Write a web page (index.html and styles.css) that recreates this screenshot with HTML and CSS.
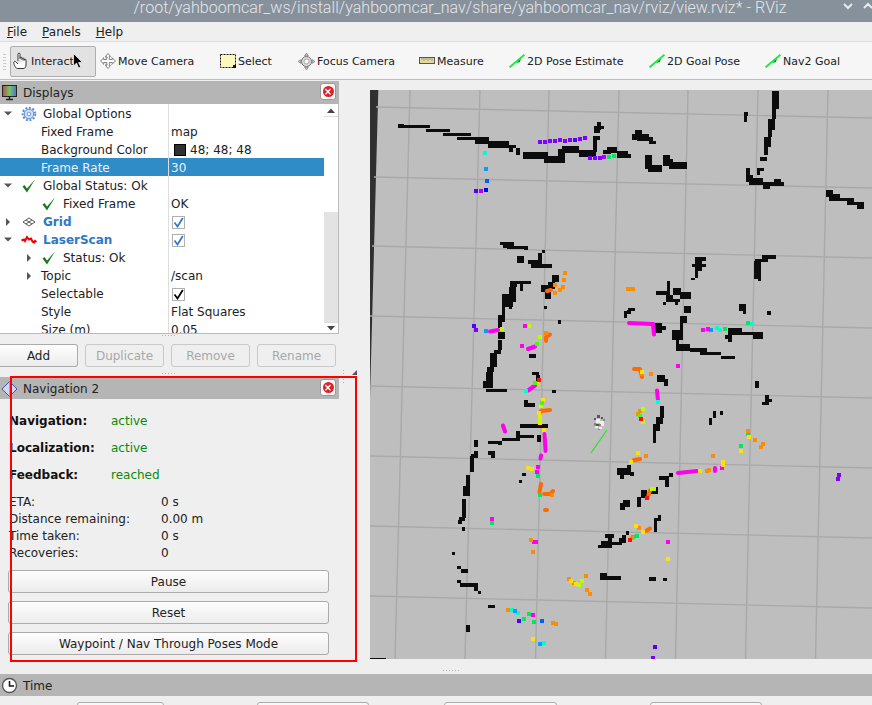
FILE: index.html
```html
<!DOCTYPE html>
<html lang="en">
<head>
<meta charset="utf-8">
<title>RViz</title>
<link rel="stylesheet" href="styles.css">
</head>
<body>
<div class="app">
  <header class="titlebar">
    <span class="title">/root/yahboomcar_ws/install/yahboomcar_nav/share/yahboomcar_nav/rviz/view.rviz* - RViz</span>
    <svg class="winbtns" width="40" height="14" viewBox="0 0 40 14"><path d="M2 4l4 4 4-4M22 8l4-4 4 4" fill="none" stroke="#e6eaee" stroke-width="2"/></svg>
  </header>
  <nav class="menubar">
    <span class="menu"><u>F</u>ile</span><span class="menu"><u>P</u>anels</span><span class="menu"><u>H</u>elp</span>
  </nav>
  <div class="toolbar">
    <div class="grip"></div>
    <div class="tool active">
      <svg width="16" height="18" viewBox="0 0 16 18"><path d="M5 9V2.200c0-1.400 2-1.400 2 0V7m0-1c0-1.200 2-1.200 2 0v2m0-1c0-1.200 2-1.200 2 0v2m0-1c0-1.200 2-1.200 2 0v5c0 2-1 3-2 3.500H4.500C3 17 1 13 .8 10.500c0-1.300 1.500-1.500 2.200-.5L5 12" fill="#fff" stroke="#222" stroke-width=".9"/></svg>
      <span>Interact</span>
    </div>
    <div class="tool">
      <svg width="16" height="16" viewBox="0 0 16 16"><path d="M8 .5l2.500 3H9.300V6.500h3V5l3.200 3-3.200 3V9.500h-3v3h1.200L8 15.500l-2.500-3h1.200v-3h-3V11L.5 8l3.200-3v1.500h3v-3H5.500z" fill="#fff" stroke="#666" stroke-width=".8"/><path d="M3 4.500h10M3 11.500h10" stroke="#999" stroke-width=".7" stroke-dasharray="1 1"/></svg>
      <span>Move Camera</span>
    </div>
    <div class="tool">
      <svg width="16" height="14" viewBox="0 0 16 14"><rect x=".5" y=".5" width="15" height="13" fill="#fcf8bc" stroke="#111" stroke-dasharray="2 1"/><rect x="13" y="11" width="3" height="3" fill="#111"/></svg>
      <span>Select</span>
    </div>
    <div class="tool">
      <svg width="17" height="17" viewBox="0 0 17 17"><circle cx="8.500" cy="8.500" r="5" fill="#ddd" stroke="#777"/><circle cx="8.500" cy="8.500" r="2.500" fill="#fff" stroke="#888" stroke-width=".7"/><path d="M8.500 0l2 3h-4zM8.500 17l2-3h-4zM0 8.500l3-2v4zM17 8.500l-3-2v4z" fill="#bbb" stroke="#777" stroke-width=".6"/></svg>
      <span>Focus Camera</span>
    </div>
    <div class="tool">
      <svg width="16" height="8" viewBox="0 0 16 8"><rect x=".5" y=".5" width="15" height="6" fill="#e6d9a0" stroke="#555"/><path d="M3 1v2M5 1v3M7 1v2M9 1v3M11 1v2M13 1v3" stroke="#777" stroke-width=".6"/></svg>
      <span>Measure</span>
    </div>
    <div class="tool">
      <svg class="arrow-ico" width="16" height="14" viewBox="0 0 16 14"><path d="M.5 13.300L15.500.7" stroke="#14f03c" stroke-width="2"/><path d="M7.500 8.800l4.500-4.300-1.200 3.800z" fill="#0a8a26"/></svg>
      <span>2D Pose Estimate</span>
    </div>
    <div class="tool">
      <svg class="arrow-ico" width="16" height="14" viewBox="0 0 16 14"><path d="M.5 13.300L15.500.7" stroke="#14f03c" stroke-width="2"/><path d="M7.500 8.800l4.500-4.300-1.200 3.800z" fill="#0a8a26"/></svg>
      <span>2D Goal Pose</span>
    </div>
    <div class="tool">
      <svg class="arrow-ico" width="16" height="14" viewBox="0 0 16 14"><path d="M.5 13.300L15.500.7" stroke="#14f03c" stroke-width="2"/><path d="M7.500 8.800l4.500-4.300-1.200 3.800z" fill="#0a8a26"/></svg>
      <span>Nav2 Goal</span>
    </div>
  </div>
  <svg class="pointer" width="10" height="16" viewBox="0 0 10 16"><path d="M.5.500v12.500l3-3 2.200 5 2-1-2.200-4.500H9.500z" fill="#000" stroke="#fff" stroke-width=".7"/></svg>

  <main class="main">
    <div class="side">
      <section class="displays">
        <div class="dock-title">
          <svg width="17" height="18" viewBox="0 0 17 18"><defs><linearGradient id="mon" x1="0" x2="1"><stop offset="0" stop-color="#c44"/><stop offset=".5" stop-color="#6c6"/><stop offset="1" stop-color="#66c"/></linearGradient></defs><rect x="1.500" y="1.500" width="14" height="11" fill="url(#mon)" stroke="#222"/><path d="M5 15.500h7M8.500 13v2" stroke="#222" stroke-width="1.500"/></svg>
          <span class="dock-name">Displays</span>
          <span class="close"><i>×</i></span>
        </div>
        <div class="tree">
          <div class="rows">
            <div class="row"><div class="name p4"><svg class="tw" width="14" height="8" viewBox="0 0 14 8"><path d="M0 1.500h8l-4 4z" fill="#555"/></svg>
              <svg class="ic" width="16" height="16" viewBox="0 0 16 16"><circle cx="8" cy="8" r="4.800" fill="#cfe0f6" stroke="#5a8cd8"/><circle cx="8" cy="8" r="6.300" fill="none" stroke="#5a8cd8" stroke-width="2" stroke-dasharray="2 1.600"/><circle cx="8" cy="8" r="1.800" fill="#fff" stroke="#5a8cd8" stroke-width=".8"/></svg>
              <span>Global Options</span></div><div class="val"></div></div>
            <div class="row"><div class="name p41"><span>Fixed Frame</span></div><div class="val">map</div></div>
            <div class="row"><div class="name p41"><span>Background Color</span></div><div class="val"><i class="swatch"></i>48; 48; 48</div></div>
            <div class="row sel"><div class="name p41"><span>Frame Rate</span></div><div class="val">30</div></div>
            <div class="row"><div class="name p4"><svg class="tw" width="14" height="8" viewBox="0 0 14 8"><path d="M0 1.500h8l-4 4z" fill="#555"/></svg>
              <svg class="ic" width="16" height="16" viewBox="0 0 16 16"><path d="M1.500 8.500L3.500 7l2.500 3.500L14 1.500 6 14.500z" fill="#1c7a1c"/></svg>
              <span>Global Status: Ok</span></div><div class="val"></div></div>
            <div class="row"><div class="name p41"><svg class="ic2" width="16" height="16" viewBox="0 0 16 16"><path d="M1.500 8.500L3.500 7l2.500 3.500L14 1.500 6 14.500z" fill="#1c7a1c"/></svg><span>Fixed Frame</span></div><div class="val">OK</div></div>
            <div class="row"><div class="name p4"><svg class="tw" width="14" height="10" viewBox="0 0 14 10"><path d="M2 1v8l4-4z" fill="#555"/></svg>
              <svg class="ic" width="16" height="12" viewBox="0 0 16 12"><path d="M2 6L8 2l6 4-6 4zM5 4l6 4M11 4L5 8" fill="none" stroke="#444" stroke-width=".9"/></svg>
              <span class="link">Grid</span></div><div class="val"><span class="check blue"><svg width="11" height="11" viewBox="0 0 11 11"><path d="M1.500 5.500l3 4L9.800 1" fill="none" stroke="currentColor" stroke-width="1.700"/></svg></span></div></div>
            <div class="row"><div class="name p4"><svg class="tw" width="14" height="8" viewBox="0 0 14 8"><path d="M0 1.500h8l-4 4z" fill="#555"/></svg>
              <svg class="ic" width="16" height="10" viewBox="0 0 16 10"><path d="M.5 5.500L3 4.500l1 1.500 2-4 2 2.500 2-1 1.500 3 1.500 1 1-1.500 1.500 1" fill="none" stroke="#e00" stroke-width="2"/></svg>
              <span class="link">LaserScan</span></div><div class="val"><span class="check blue"><svg width="11" height="11" viewBox="0 0 11 11"><path d="M1.500 5.500l3 4L9.800 1" fill="none" stroke="currentColor" stroke-width="1.700"/></svg></span></div></div>
            <div class="row"><div class="name p25"><svg class="tw2" width="16" height="10" viewBox="0 0 16 10"><path d="M2 1v8l4-4z" fill="#555"/></svg><svg class="ic2" width="16" height="16" viewBox="0 0 16 16"><path d="M1.500 8.500L3.500 7l2.500 3.500L14 1.500 6 14.500z" fill="#1c7a1c"/></svg><span>Status: Ok</span></div><div class="val"></div></div>
            <div class="row"><div class="name p25"><svg class="tw2" width="16" height="10" viewBox="0 0 16 10"><path d="M2 1v8l4-4z" fill="#555"/></svg><span>Topic</span></div><div class="val">/scan</div></div>
            <div class="row"><div class="name p41"><span>Selectable</span></div><div class="val"><span class="check"><svg width="11" height="11" viewBox="0 0 11 11"><path d="M1.500 5.500l3 4L9.800 1" fill="none" stroke="currentColor" stroke-width="1.700"/></svg></span></div></div>
            <div class="row"><div class="name p41"><span>Style</span></div><div class="val">Flat Squares</div></div>
            <div class="row"><div class="name p41"><span>Size (m)</span></div><div class="val">0.05</div></div>
          </div>
          <div class="scroll">
            <div class="sc-btn"><svg width="8" height="5" viewBox="0 0 8 5"><path d="M0 5l4-4.500L8 5z" fill="#444"/></svg></div>
            <div class="sc-thumb"></div>
            <div class="sc-trough"></div>
            <div class="sc-btn end"><svg width="8" height="5" viewBox="0 0 8 5"><path d="M0 0l4 4.500L8 0z" fill="#444"/></svg></div>
          </div>
        </div>
        <div class="dots"></div>
        <div class="actions">
          <button class="btn add">Add</button>
          <button class="btn off">Duplicate</button>
          <button class="btn off">Remove</button>
          <button class="btn off">Rename</button>
        </div>
        <div class="dots d2"></div>
      </section>
      <section class="nav2">
        <div class="dock-title t2">
          <svg width="17" height="18" viewBox="0 0 17 18"><path d="M1 9l7.500-7.500L16 9l-7.500 7.500z" fill="#cfd8f0" stroke="#3f57a8"/><path d="M8.500 1.500V16.500" stroke="#7f92cc" stroke-width=".7"/></svg>
          <span class="dock-name">Navigation 2</span>
          <span class="close"><i>×</i></span>
        </div>
        <div class="status"><b>Navigation:</b><span class="ok">active</span></div>
        <div class="status"><b>Localization:</b><span class="ok">active</span></div>
        <div class="status"><b>Feedback:</b><span class="ok">reached</span></div>
        <div class="stats">
          <div class="stat"><span>ETA:</span><span>0 s</span></div>
          <div class="stat"><span>Distance remaining:</span><span>0.00 m</span></div>
          <div class="stat"><span>Time taken:</span><span>0 s</span></div>
          <div class="stat"><span>Recoveries:</span><span>0</span></div>
        </div>
        <div class="navbtns">
          <button class="btn">Pause</button>
          <button class="btn">Reset</button>
          <button class="btn">Waypoint / Nav Through Poses Mode</button>
        </div>
      </section>
    </div>
    <div class="vgrip"><i></i></div>
    <svg class="map" width="502" height="569" viewBox="370 90 502 569">
      <rect x="370" y="90" width="502" height="569" fill="#bebebe"/>
      <path d="M370 90h8.300L370 398z" fill="#303030"/>
      <g stroke="#a9a9a9" stroke-width="1.400" fill="none">
        <path d="M376 107L872 118M374 177L872 188M372 246L872 258M370 316L872 328M370 386L872 398M370 456L872 468M370 526L872 538M370 596L872 608"/>
        <path d="M410 90L395 659M480 90L465 659M549 90L535.500 659M619 90L605.500 659M688 90L675.500 659M758 90L745.500 659M828 90L815.500 659"/>
      </g>
      <path fill="#0c0c0c" d="M398 124h6v4h-6zM404 125h26v3h-26zM426 129h24v3h-24zM443 133h28v3h-28zM457 137h32v3h-32zM475 140h14v4h-14zM488 141h21v7h-21zM509 145h7v3h-7zM509 148h4v4h-4zM516 148h4v7h-4zM523 152h25v7h-25zM544 156h21v7h-21zM558 149h7v7h-7zM562 146h17v7h-17zM579 150h17v7h-17zM593 140h4v12h-4zM593 136h7v4h-7zM594 126h6v7h-6zM597 122h4v8h-4zM600 126h4v3h-4zM607 147h10v6h-10zM603 150h8v4h-8zM617 151h3v7h-3zM620 151h8v7h-8zM628 154h3v4h-3zM500 242h14v3h-14zM503 245h11v3h-11zM507 246h21v3h-21zM524 249h4v1h-4zM542 250h3v3h-3zM517 256h7v7h-7zM528 260h14v4h-14zM538 253h4v9h-4zM531 264h21v4h-21zM632 134h17v6h-17zM635 130h7v4h-7zM637 137h16v4h-16zM649 141h7v3h-7zM645 155h7v14h-7zM648 165h14v7h-14zM663 155h7v11h-7zM669 162h18v7h-18zM670 159h3v7h-3zM744 112h4v4h-4zM744 116h3v6h-3zM772 91h7v18h-7zM772 109h4v10h-4zM768 119h7v11h-7zM768 130h4v7h-4zM764 137h7v10h-7zM764 147h4v8h-4zM760 157h7v4h-7zM746 168h4v14h-4zM749 178h7v7h-7zM750 175h3v3h-3zM756 178h7v7h-7zM763 182h21v4h-21zM774 179h7v3h-7zM763 186h7v3h-7zM757 168h3v7h-3zM757 168h7v3h-7zM826 190h7v7h-7zM829 194h11v7h-11zM840 198h14v3h-14zM847 201h7v4h-7zM857 202h7v7h-7zM854 202h3v3h-3zM695 257h11v4h-11zM695 261h7v10h-7zM692 264h14v3h-14zM695 271h3v7h-3zM691 278h4v2h-4zM762 255h14v4h-14zM755 259h13v3h-13zM754 261h7v18h-7zM758 279h3v2h-3zM552 275h7v7h-7zM541 285h7v7h-7zM548 282h7v7h-7zM545 292h6v7h-6zM544 306h3v3h-3zM558 320h3v4h-3zM510 281h7v6h-7zM517 281h14v3h-14zM520 284h3v7h-3zM509 287h7v15h-7zM502 294h11v13h-11zM509 306h3v3h-3zM502 307h3v13h-3zM498 315h7v7h-7zM498 322h4v6h-4zM498 332h7v7h-7zM498 340h4v10h-4zM494 350h7v4h-7zM490 353h7v14h-7zM487 367h7v5h-7zM486 372h7v16h-7zM483 381h10v7h-10zM486 389h21v3h-21zM529 354h7v4h-7zM532 372h7v3h-7zM536 375h4v6h-4zM552 390h4v3h-4zM524 400h4v7h-4zM524 403h11v4h-11zM520 424h28v4h-28zM516 431h4v9h-4zM502 438h18v3h-18zM520 435h14v3h-14zM537 435h4v7h-4zM488 441h14v3h-14zM498 444h4v1h-4zM474 440h4v7h-4zM474 451h4v5h-4zM471 454h7v4h-7zM488 451h7v4h-7zM491 455h4v3h-4zM470 456h4v14h-4zM470 460h4v12h-4zM466 475h4v21h-4zM463 486h7v10h-7zM462 499h4v19h-4zM459 517h6v4h-6zM458 520h4v4h-4zM462 527h3v4h-3zM522 473h4v3h-4zM519 480h3v3h-3zM452 552h3v3h-3zM457 566h4v3h-4zM461 569h7v4h-7zM457 580h4v3h-4zM460 583h18v4h-18zM474 587h4v4h-4zM478 591h3v3h-3zM488 605h7v3h-7zM466 625h4v7h-4zM617 468h10v7h-10zM620 475h4v4h-4zM627 465h4v10h-4zM630 472h4v4h-4zM659 476h10v4h-10zM669 473h4v4h-4zM665 480h4v7h-4zM641 490h6v8h-6zM637 497h4v10h-4zM650 487h8v7h-8zM623 500h7v7h-7zM620 503h5v7h-5zM654 520h3v12h-3zM654 518h6v3h-6zM658 515h3v6h-3zM605 534h9v4h-9zM608 538h4v10h-4zM601 541h9v7h-9zM598 545h10v3h-10zM612 542h10v3h-10zM619 538h7v5h-7zM622 535h4v7h-4zM626 531h3v4h-3zM600 573h7v7h-7zM607 576h14v4h-14zM649 577h7v4h-7zM663 578h4v3h-4zM667 281h3v10h-3zM656 291h14v4h-14zM666 295h7v7h-7zM673 288h8v7h-8zM680 292h11v7h-11zM663 302h3v3h-3zM670 299h10v3h-10zM675 302h3v3h-3zM684 306h7v7h-7zM624 311h3v7h-3zM628 308h7v3h-7zM627 310h4v4h-4zM655 323h7v10h-7zM662 326h4v4h-4zM680 316h7v7h-7zM680 323h3v12h-3zM672 330h11v10h-11zM676 340h3v5h-3zM676 344h14v7h-14zM690 348h17v4h-17zM700 352h21v3h-21zM721 356h14v3h-14zM728 328h14v7h-14zM742 332h11v3h-11zM753 332h10v7h-10zM725 335h7v4h-7zM728 339h4v3h-4zM739 304h7v7h-7zM743 310h3v4h-3zM767 311h4v4h-4zM657 375h8v7h-8zM664 379h4v7h-4zM755 381h4v7h-4zM765 395h4v7h-4zM762 402h7v3h-7zM769 399h3v3h-3zM713 411h3v7h-3zM720 411h3v4h-3zM709 418h3v7h-3zM660 406h4v12h-4zM656 417h7v7h-7zM653 424h7v7h-7zM653 427h3v16h-3zM370 658h16v1h-16z"/>
      <g stroke="#ff00ee" stroke-width="4" fill="none" stroke-linecap="round" stroke-linejoin="round">
        <path d="M490 331.500L498 330M528 349L535 346.500M528 390.500L535 385.500M503 425.500L505 431.500M544.500 434L545.500 451M541 455.500L540.500 458.500M629 323L652 324M653 324L654 334.500M657 390.500L658 400.500M678 473L697 471M715 468V471"/>
      </g>
      <g stroke="#ff6a00" stroke-width="4" fill="none" stroke-linecap="round" stroke-linejoin="round">
        <path d="M547 291L551 290M547 335L550 334.500L546 337V341M541 411L550 410M634 369H640L642 377M541 484L539.500 492M544 494H550L553 491M545 510H547M646 531L650 528.500M648.500 495L650 490.500M634 460L640 459"/>
      </g>
      <g id="pts">
      <path fill="#8000ff" d="M538 140h4v4h-4zM543 140h4v4h-4zM548 139h4v4h-4zM553 139h4v4h-4zM558 138h4v4h-4zM563 139h4v4h-4zM568 138h4v4h-4zM578 137h4v4h-4zM583 136h4v4h-4zM588 156h4v4h-4zM593 156h4v4h-4zM598 156h4v4h-4zM474 328h4v4h-4zM837 473h4v4h-4zM836 477h4v4h-4zM651 656h4v3h-4z"/>
      <path fill="#5000ff" d="M573 138h4v4h-4zM472 324h4v4h-4zM474 189h4v4h-4zM517 619h4v4h-4zM653 645h4v4h-4z"/>
      <path fill="#b000ff" d="M602 155h4v4h-4zM479 189h4v4h-4z"/>
      <path fill="#00e860" d="M607 155h4v4h-4zM612 154h4v4h-4zM746 321h4v4h-4zM536 474h4v4h-4zM490 521h4v4h-4zM527 612h4v4h-4zM522 617h4v4h-4zM532 620h4v4h-4zM723 327h4v4h-4zM739 444h4v4h-4zM746 432h4v4h-4zM535 342h4v4h-4zM538 493h4v4h-4zM635 534h4v4h-4zM631 535h4v4h-4z"/>
      <path fill="#00ffd0" d="M483 151h4v4h-4zM715 326h4v4h-4zM718 328h4v4h-4zM750 322h4v4h-4zM510 608h4v4h-4zM516 611h4v4h-4zM542 641h4v4h-4zM524 389h4v4h-4zM656 400h4v4h-4z"/>
      <path fill="#00a0ff" d="M484 167h4v4h-4zM484 329h4v4h-4zM709 328h4v4h-4zM513 609h4v4h-4zM538 642h4v4h-4z"/>
      <path fill="#0060ff" d="M485 179h4v4h-4zM540 619h4v4h-4z"/>
      <path fill="#0000ff" d="M484 188h4v4h-4z"/>
      <path fill="#ff00ee" d="M523 324h4v4h-4zM520 344h4v4h-4zM536 465h4v4h-4zM535 470h4v4h-4zM701 328h4v4h-4zM706 327h4v4h-4zM676 364h4v4h-4zM490 517h4v4h-4zM532 540h4v4h-4zM534 540h4v4h-4zM531 613h4v4h-4zM666 540h4v4h-4zM720 466h4v4h-4z"/>
      <path fill="#ff8c00" d="M563 271h4v4h-4zM562 278h4v4h-4zM553 283h4v4h-4zM561 285h4v4h-4zM558 288h4v4h-4zM553 291h4v4h-4zM626 287h4v4h-4zM629 287h4v4h-4zM631 287h4v4h-4zM544 331h4v4h-4zM640 372h4v4h-4zM649 372h4v4h-4zM638 409h4v4h-4zM636 412h4v4h-4zM746 429h4v4h-4zM753 438h4v4h-4zM761 442h4v4h-4zM759 445h4v4h-4zM567 577h4v4h-4zM572 581h4v4h-4zM584 574h4v4h-4zM585 588h4v4h-4zM588 592h4v4h-4zM529 538h4v4h-4zM531 550h4v4h-4zM506 608h4v4h-4zM551 621h4v4h-4zM554 622h4v4h-4zM711 454h4v4h-4zM705 469h4v4h-4zM707 468h4v4h-4zM644 454h4v4h-4zM637 526h4v4h-4zM630 536h4v4h-4zM550 493h4v4h-4z"/>
      <path fill="#ffe000" d="M541 398h4v4h-4zM539 404h4v4h-4zM537 411h4v4h-4zM538 415h4v4h-4zM538 421h4v4h-4zM542 428h4v4h-4zM526 466h4v4h-4zM530 467h4v4h-4zM569 579h4v4h-4zM574 582h4v4h-4zM531 637h4v4h-4zM634 524h4v4h-4zM641 530h4v4h-4zM666 557h4v4h-4zM747 435h4v4h-4zM739 449h4v4h-4zM721 460h4v4h-4zM721 463h4v4h-4zM698 469h4v4h-4zM636 451h4v4h-4zM640 370h4v4h-4zM629 460h4v4h-4zM535 381h4v4h-4z"/>
      <path fill="#b8ff00" d="M500 327h4v4h-4zM527 324h4v4h-4zM538 335h4v4h-4zM641 407h4v4h-4zM641 420h4v4h-4zM538 418h4v4h-4zM577 583h4v4h-4zM580 579h4v4h-4zM650 487h4v4h-4zM652 487h4v4h-4z"/>
      <path fill="#40ff00" d="M535 342h4v4h-4zM540 401h4v4h-4zM638 414h4v4h-4zM533 381h4v4h-4z"/>
      <path fill="#ff1010" d="M537 378h4v4h-4zM645 496h4v4h-4zM628 538h4v4h-4zM639 417h4v4h-4z"/>
      </g>
      <g>
        <path fill="#555" d="M597 415h3v3h-3zM594 418h2v2h-2zM601 417h2v2h-2zM596 424h3v2h-3z"/>
        <path fill="#eee" d="M596 419h4v4h-4zM600 421h4v5h-4zM595 426h3v2h-3zM599 427h3v2h-3z"/>
        <path fill="#888" d="M594 423h2v3h-2zM603 419h2v2h-2zM599 424h2v2h-2zM598 429h2v1h-2z"/>
      </g>
      <path d="M607 430L591 453" stroke="#28e028" stroke-width="1.200"/>
    </svg>
    <div class="redbox"></div>
    <div class="hdots"></div>
  </main>
  <section class="timebar">
    <svg width="17" height="17" viewBox="0 0 17 17"><circle cx="8.500" cy="8.500" r="7" fill="#fff" stroke="#555" stroke-width="1.400"/><path d="M8.500 4v5H13" fill="none" stroke="#111" stroke-width="1.500"/></svg>
    <span class="dock-name">Time</span>
  </section>
  <div class="timerow">
    <span class="tbox b1"></span><span class="tbox b2"></span><span class="tbox b3"></span><span class="tbox b4"></span>
  </div>
</div>
</body>
</html>
```
FILE: styles.css
```css
* { box-sizing: border-box; }
html, body { margin: 0; padding: 0; }
body { background: #efefef; font-family: "DejaVu Sans", sans-serif; font-size: 12px; color: #1a1a1a; }
.app { position: relative; width: 872px; height: 705px; overflow: hidden; display: flex; flex-direction: column; }

.titlebar { height: 22px; background: #87919c; position: relative; display: flex; justify-content: center; flex: none; }
.title { font-family: Roboto, sans-serif; font-weight: 300; font-size: 16px; letter-spacing: 0.05px; line-height: 16px; color: #e3e7ea; margin-left: 48px; white-space: nowrap; }
.winbtns { position: absolute; left: 842px; top: 0; }

.menubar { height: 20px; flex: none; display: flex; padding-left: 7px; gap: 15px; align-items: center; border-bottom: 1px solid #dcdcdc; }
.menu { line-height: 18px; color: #222; }

.toolbar { height: 38px; flex: none; background: #f6f6f6; border-bottom: 1px solid #bdbdbd; display: grid; grid-template-columns: 86px 120px 78px 121px 90px 140px 116px 100px; align-items: center; padding: 1px 0 0 10px; position: relative; font-size: 11px; color: #222; }
.grip { position: absolute; left: 3px; top: 12px; width: 3px; height: 16px; background: repeating-linear-gradient(#ccc 0 1px, transparent 1px 3px); }
.tool { display: flex; align-items: center; gap: 2px; padding-left: 4px; height: 31px; white-space: nowrap; }
.tool.active { background: #e2e2e2; border: 1px solid #aeaeae; border-radius: 2px; padding-left: 2px; }
.pointer { position: absolute; left: 73px; top: 53px; }

.main { flex: none; height: 594px; display: flex; position: relative; }
.side { width: 339px; flex: none; display: flex; flex-direction: column; padding-top: 1px; }
.dock-title { height: 23px; background: #b5b5b5; display: flex; align-items: center; padding-left: 1px; position: relative; }
.dock-title.t2 { height: 22px; padding-top: 1px; }
.dock-name { margin-left: 5px; color: #222; }
.close { position: absolute; right: 3px; top: 2px; width: 16px; height: 17px; background: #f8f8f8; border-radius: 3px; border: 1px solid #999; display: flex; align-items: center; justify-content: center; }
.close i { width: 11px; height: 11px; border-radius: 50%; background: #d8232a; color: #fff; font-style: normal; font-size: 10px; font-weight: bold; line-height: 11px; text-align: center; }

.tree { height: 230px; display: flex; background: #fff; border-bottom: 1px solid #bbb; border-right: 1px solid #bbb; overflow: hidden; }
.rows { width: 324px; flex: none; }
.row { display: grid; grid-template-columns: 168px 156px; height: 18px; line-height: 18px; }
.name { display: flex; align-items: center; white-space: nowrap; color: #222; padding-top: 1px; }
.val { border-left: 1px solid #ddd; padding: 1px 0 0 2px; display: flex; align-items: center; color: #222; white-space: nowrap; }
.p4 { padding-left: 4px; }
.p41 { padding-left: 41px; }
.p25 { padding-left: 25px; }
.tw { flex: none; }
.tw2 { flex: none; }
.ic { margin: 0 6px 0 3px; flex: none; }
.ic2 { margin-right: 6px; flex: none; }
.row.sel { background: #308cc6; }
.row.sel .name, .row.sel .val { color: #e8f2f9; }
.link { color: #2f78c4; font-weight: bold; }
.swatch { width: 12px; height: 12px; background: #303030; border: 1px solid #000; margin: 0 4px 0 3px; }
.check { width: 13px; height: 13px; border: 1px solid #b0b0b0; background: #fff; margin-left: 1px; display: flex; align-items: center; justify-content: center; color: #000; }
.check.blue { color: #2f78c4; }
.scroll { width: 14px; flex: none; display: flex; flex-direction: column; background: #fff; }
.sc-btn { height: 13px; display: flex; align-items: center; justify-content: center; border-bottom: 1px solid #ddd; flex: none; }
.sc-btn.end { border-bottom: 0; border-top: 1px solid #ddd; height: 11px; }
.sc-thumb { height: 95px; flex: none; }
.sc-trough { flex: 1; background: #e3e3e3; }

.dots { height: 10px; position: relative; }
.dots::after { content: ""; position: absolute; left: 162px; top: 1px; width: 15px; height: 1px; background: repeating-linear-gradient(90deg, #b4b4b4 0 1px, transparent 1px 3px); }
.dots.d2::after { top: 6px; }
.actions { display: flex; gap: 7px; height: 23px; }
.btn { height: 23px; font: 12px "DejaVu Sans", sans-serif; color: #222; background: linear-gradient(#fdfdfd, #ececec); border: 1px solid #ababab; border-radius: 3px; padding: 0; }
.actions .btn { width: 79px; }
.actions .btn.add { width: 78px; border-left: 0; border-radius: 0 3px 3px 0; }
.actions .btn.off { color: #a8a8a8; background: #efefef; border-color: #c9c9c9; }

.nav2 { display: flex; flex-direction: column; }
.status { display: grid; grid-template-columns: 102px 1fr; height: 27px; align-items: center; padding-left: 9px; }
.t2 + .status { margin-top: 8px; }
.status b { color: #111; }
.ok { color: #0a8a0a; }
.stats { margin-top: 6px; }
.stat { display: grid; grid-template-columns: 152px 1fr; height: 17px; line-height: 17px; padding-left: 9px; color: #222; }
.navbtns { display: flex; flex-direction: column; gap: 8px; margin: 8px 10px 0 8px; }

.vgrip { width: 31px; flex: none; position: relative; }
.vgrip i { position: absolute; left: 4px; top: 290px; width: 1px; height: 15px; background: repeating-linear-gradient(#b4b4b4 0 1px, transparent 1px 3px); }
.vgrip i::after { content: ""; position: absolute; left: 9px; top: 0; border-style: solid; border-width: 0 0 5px 5px; border-color: transparent transparent #555 transparent; }
.map { margin-top: 10px; flex: none; display: block; }
.redbox { position: absolute; left: 10px; top: 296px; width: 347px; height: 286px; border: 2px solid #f00; pointer-events: none; }
.hdots { position: absolute; left: 443px; top: 590px; width: 17px; height: 1px; background: repeating-linear-gradient(90deg, #b4b4b4 0 1px, transparent 1px 3px); }

.timebar { height: 22px; flex: none; background: #b5b5b5; display: flex; align-items: center; padding: 1px 0 0 1px; }
.timerow { flex: 1; position: relative; }
.tbox { position: absolute; top: 6px; height: 8px; border: 1px solid #ababab; border-radius: 3px; background: #f8f8f8; }
.b1 { left: 77px; width: 87px; }
.b2 { left: 257px; width: 112px; }
.b3 { left: 444px; width: 113px; }
.b4 { left: 650px; width: 112px; }
```
